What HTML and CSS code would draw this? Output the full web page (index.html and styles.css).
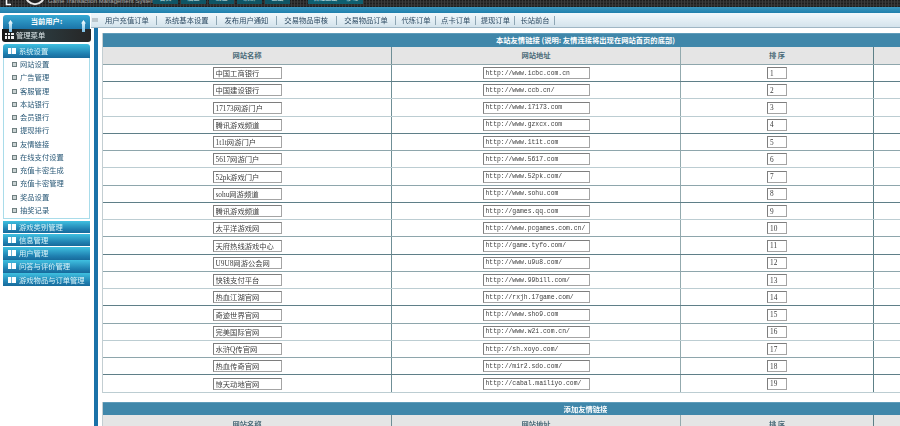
FILE: index.html
```html
<!DOCTYPE html>
<html lang="zh">
<head>
<meta charset="utf-8">
<title>友情链接管理</title>
<link rel="stylesheet" href="styles.css">
</head>
<body>
<div class="page">
  <header class="topbar">
    <svg class="logo" width="46" height="7" viewBox="0 0 46 7"><path d="M6.5 0v4.5H11" fill="none" stroke="#fff" stroke-width="1.6"/><circle cx="35" cy="-5" r="9.2" fill="#222" stroke="#e8e8e8" stroke-width="2"/></svg>
    <span class="system-name">Game Transaction Management System</span>
    <div class="tools">
      <span class="tool">首页</span><span class="tool">后退</span><span class="tool">前进</span><span class="tool">刷新</span><span class="tool">退出</span>
    </div>
    <span class="status">管理退出 · 移域</span>
  </header>
  <div class="strip"></div>
  <div class="body">
    <aside class="sidebar">
      <div class="user-tab">当前用户:<i class="pillar pillar-left"></i><i class="pillar pillar-right"></i></div>
      <div class="menu-title">
        <svg width="9" height="7" viewBox="0 0 9 7"><path d="M0 1h2v2H0zM3 1h2v2H3zM6 1h3v2H6zM0 4h2v3H0zM3 4h2v3H3zM6 4h3v3H6z" fill="#eee"/></svg>
        管理菜单
      </div>
      <div class="group-head group-open"><i class="book"></i>系统设置</div>
      <ul class="items">
        <li><i class="bullet"></i>网站设置</li>
        <li><i class="bullet"></i>广告管理</li>
        <li><i class="bullet"></i>客服管理</li>
        <li><i class="bullet"></i>本站银行</li>
        <li><i class="bullet"></i>会员银行</li>
        <li><i class="bullet"></i>提现排行</li>
        <li><i class="bullet"></i>友情链接</li>
        <li><i class="bullet"></i>在线支付设置</li>
        <li><i class="bullet"></i>充值卡密生成</li>
        <li><i class="bullet"></i>充值卡密管理</li>
        <li><i class="bullet"></i>奖品设置</li>
        <li><i class="bullet"></i>抽奖记录</li>
      </ul>
      <div class="group-head"><i class="book"></i>游戏类别管理</div>
      <div class="group-head"><i class="book"></i>信息管理</div>
      <div class="group-head"><i class="book"></i>用户管理</div>
      <div class="group-head"><i class="book"></i>问答与评价管理</div>
      <div class="group-head"><i class="book"></i>游戏物品与订单管理</div>
    </aside>
    <main class="main">
      <nav class="nav">
        <i class="grip"></i>
        <a class="nav-item">用户充值订单</a>
        <a class="nav-item">系统基本设置</a>
        <a class="nav-item">发布用户通知</a>
        <a class="nav-item">交易物品审核</a>
        <a class="nav-item">交易物品订单</a>
        <a class="nav-item nav-short">代练订单</a>
        <a class="nav-item nav-short">点卡订单</a>
        <a class="nav-item nav-short">提现订单</a>
        <a class="nav-item nav-short">长站前台</a>
      </nav>
      <div class="content">
        <i class="handle"></i>
        <section class="panel">
          <h2 class="panel-title">本站友情链接 (说明: 友情连接将出现在网站首页的底部)</h2>
          <div class="row head line-m"><div>网站名称</div><div>网站地址</div><div>排 序</div><div></div></div>
          <div class="row line-d"><div><input class="f-name" value="中国工商银行"></div><div><input class="f-url" value="http://www.icbc.com.cn"></div><div><input class="f-sort" value="1"></div><div></div></div>
          <div class="row line-l"><div><input class="f-name" value="中国建设银行"></div><div><input class="f-url" value="http://www.ccb.cn/"></div><div><input class="f-sort" value="2"></div><div></div></div>
          <div class="row line-l"><div><input class="f-name" value="17173网游门户"></div><div><input class="f-url" value="http://www.17173.com"></div><div><input class="f-sort" value="3"></div><div></div></div>
          <div class="row line-d"><div><input class="f-name" value="腾讯游戏频道"></div><div><input class="f-url" value="http://www.gzxcx.com"></div><div><input class="f-sort" value="4"></div><div></div></div>
          <div class="row line-m"><div><input class="f-name" value="1t1t网游门户"></div><div><input class="f-url" value="http://www.1t1t.com"></div><div><input class="f-sort" value="5"></div><div></div></div>
          <div class="row line-l"><div><input class="f-name" value="5617网游门户"></div><div><input class="f-url" value="http://www.5617.com"></div><div><input class="f-sort" value="6"></div><div></div></div>
          <div class="row line-m"><div><input class="f-name" value="52pk游戏门户"></div><div><input class="f-url" value="http://www.52pk.com/"></div><div><input class="f-sort" value="7"></div><div></div></div>
          <div class="row line-d"><div><input class="f-name" value="sohu网游频道"></div><div><input class="f-url" value="http://www.sohu.com"></div><div><input class="f-sort" value="8"></div><div></div></div>
          <div class="row line-l"><div><input class="f-name" value="腾讯游戏频道"></div><div><input class="f-url" value="http://games.qq.com"></div><div><input class="f-sort" value="9"></div><div></div></div>
          <div class="row line-m"><div><input class="f-name" value="太平洋游戏网"></div><div><input class="f-url" value="http://www.pcgames.com.cn/"></div><div><input class="f-sort" value="10"></div><div></div></div>
          <div class="row line-d"><div><input class="f-name" value="天府热线游戏中心"></div><div><input class="f-url" value="http://game.tyfo.com/"></div><div><input class="f-sort" value="11"></div><div></div></div>
          <div class="row line-m"><div><input class="f-name" value="U9U8网游公会网"></div><div><input class="f-url" value="http://www.u9u8.com/"></div><div><input class="f-sort" value="12"></div><div></div></div>
          <div class="row line-l"><div><input class="f-name" value="快钱支付平台"></div><div><input class="f-url" value="http://www.99bill.com/"></div><div><input class="f-sort" value="13"></div><div></div></div>
          <div class="row line-d"><div><input class="f-name" value="热血江湖官网"></div><div><input class="f-url" value="http://rxjh.17game.com/"></div><div><input class="f-sort" value="14"></div><div></div></div>
          <div class="row line-m"><div><input class="f-name" value="奇迹世界官网"></div><div><input class="f-url" value="http://www.sho9.com"></div><div><input class="f-sort" value="15"></div><div></div></div>
          <div class="row line-l"><div><input class="f-name" value="完美国际官网"></div><div><input class="f-url" value="http://www.w2i.com.cn/"></div><div><input class="f-sort" value="16"></div><div></div></div>
          <div class="row line-m"><div><input class="f-name" value="水浒Q传官网"></div><div><input class="f-url" value="http://sh.xoyo.com/"></div><div><input class="f-sort" value="17"></div><div></div></div>
          <div class="row line-d"><div><input class="f-name" value="热血传奇官网"></div><div><input class="f-url" value="http://mir2.sdo.com/"></div><div><input class="f-sort" value="18"></div><div></div></div>
          <div class="row line-l"><div><input class="f-name" value="惊天动地官网"></div><div><input class="f-url" value="http://cabal.mailiyo.com/"></div><div><input class="f-sort" value="19"></div><div></div></div>
        </section>
        <section class="panel panel-add">
          <h2 class="panel-title">添加友情链接</h2>
          <div class="row head line-m"><div>网站名称</div><div>网站地址</div><div>排 序</div><div></div></div>
        </section>
      </div>
    </main>
  </div>
</div>
</body>
</html>
```
FILE: styles.css
```css
* { box-sizing: border-box; }
html, body { margin: 0; padding: 0; background: #fff; }
body { font-family: "Noto Sans CJK SC", "Liberation Sans", sans-serif; font-size: 7.3px; color: #34505f; }
/* the reference is a downscaled capture, so everything is slightly soft */
.page { width: 900px; height: 426px; display: flex; flex-direction: column; overflow: hidden; filter: blur(0.3px); }

/* top bar: only its lower edge is in view */
.topbar {
  height: 7px; flex: none; display: flex; align-items: flex-end; overflow: hidden;
  background-color: #2c2c2c;
  background-image: repeating-linear-gradient(90deg, #3b3b3b 0 1px, transparent 1px 3px), repeating-linear-gradient(0deg, #1e1e1e 0 1px, transparent 1px 3px);
}
.logo { flex: none; width: 46px; height: 7px; margin-right: 2px; }
.system-name { width: 105px; flex: none; color: #a8a8a8; font-family: "Liberation Sans", sans-serif; font-size: 6px; line-height: 7px; padding-bottom: 2px; white-space: nowrap; overflow: hidden; }
.tools { display: flex; gap: 3px; padding-bottom: 3px; }
.tool { width: 25px; height: 8px; line-height: 4px; background: #0f5565; color: #cfe6ea; text-align: center; font-size: 6px; }
.status { margin: 0 0 3px 18px; width: 55px; height: 8px; line-height: 4px; background: #0f5f70; color: #cfe6ea; text-align: center; font-size: 6px; white-space: nowrap; }
.strip { height: 6px; flex: none; background: linear-gradient(#3b97bf, #1f80ad); }

.body { flex: 1; display: flex; min-height: 0; }

/* sidebar */
.sidebar { width: 91px; flex: none; padding: 2px 0 0 3px; line-height: 13px; }
.user-tab { position: relative; width: 87px; height: 14px; border-radius: 3px 3px 0 0; background: linear-gradient(#36a9d3, #1b74a8); color: #fff; text-align: center; font-weight: 700; }
.pillar { position: absolute; top: 5px; width: 5px; height: 12px; background: linear-gradient(#fff, #a9d8f0 60%, #7cbfe6); clip-path: polygon(50% 0, 100% 30%, 80% 30%, 80% 100%, 20% 100%, 20% 30%, 0 30%); z-index: 2; }
.pillar-left { left: 5px; }
.pillar-right { left: 78px; }
.menu-title { width: 89px; height: 13px; margin-left: -1px; padding-left: 3px; display: flex; align-items: center; gap: 2px; border-radius: 0 0 3px 3px; background: linear-gradient(90deg, #161616, #2c3d42 35%, #262626); color: #dfe8ea; }
.group-head { width: 87px; height: 12.4px; margin-bottom: 0.7px; display: flex; align-items: center; gap: 3px; padding-left: 5px; line-height: 12px; background: linear-gradient(#3fc0e0, #1f7fb0 70%, #176a9b); color: #d9f2f8; white-space: nowrap; }
.group-open { height: 14px; margin: 2px 0 0; border-radius: 3px 3px 0 0; }
.book { width: 8px; height: 6px; flex: none; background: linear-gradient(90deg, #fff 0 3px, #6fb4d4 3px 4px, #fff 4px 8px); }
.items { list-style: none; margin: 0 0 2px; padding: 0 0 1.4px; width: 87px; height: 161px; border: 1px solid #a9dcea; border-top: 0; }
.items li { height: 13.25px; display: flex; align-items: center; gap: 3px; padding-left: 8px; color: #2b5a78; line-height: 13px; }
.bullet { width: 5px; height: 5px; flex: none; border: 1px solid #6f7f80; background: #c9d2d2; }

/* main */
.main { flex: 1; min-width: 0; display: flex; flex-direction: column; }
.nav { height: 15px; flex: none; display: flex; align-items: center; background: linear-gradient(#f1f8fc, #d4e3ec); border-bottom: 1px solid #9fb6c4; color: #2d4a62; white-space: nowrap; }
.grip { width: 6px; height: 4px; margin: 0 0 0 1px; flex: none; background: #bcc7cd; }
.nav-item { padding: 0 7.5px; height: 9px; line-height: 9px; border-right: 1px solid #8ea6b4; }
.nav-item:first-of-type { padding-left: 7px; }
.nav-short { padding: 0 4.5px 0 5px; }
.content { position: relative; flex: 1; min-height: 0; margin-left: 3px; border-left: 4px solid #1a72a8; padding: 5px 0 0 4px; overflow: hidden; }
.handle { position: absolute; left: -3px; top: 221px; width: 3px; height: 23px; background: linear-gradient(90deg, #2a2a2a, #444); }
.handle::after { content: ""; position: absolute; left: 0; top: 10px; border: 2px solid transparent; border-left: 0; border-right: 2px solid #eee; }

/* panels */
.panel { width: 966px; border-left: 1px solid #c3ced2; }
.panel-add { margin-top: 9px; }
.panel-title { margin: 0; height: 13.7px; line-height: 13.7px; background: #4087aa; border-top: 1px solid #5f9cba; color: #fff; font-size: 7.3px; font-weight: 700; text-align: center; }
.row { height: 17.263px; display: grid; grid-template-columns: 289px 289px 193px 1fr; align-items: stretch; border-bottom: 1px solid #8aa5ab; }
.row > div { display: flex; align-items: center; justify-content: center; border-right: 1px solid #6f8f96; }
.row > div:nth-child(3) { border-right-color: #5d8087; }
.row > div:nth-child(2) { border-right-color: #93aaae; }
.row > div:last-child { border-right: 0; }
.head { height: 18.3px; background: #e5e5e5; color: #4a6a78; font-weight: 700; }
.line-d { border-bottom-color: #5f7f88; }
.line-m { border-bottom-color: #8ea6ac; }
.line-l { border-bottom-color: #bccdd2; }

input { height: 12px; margin: 0; padding: 0 2px; background: #fff; border: 1px solid #7e7e7e; border-right-color: #a4a4a4; border-bottom-color: #a4a4a4; border-radius: 0; outline: 0; color: #3c3c3c; }
.f-name { width: 69px; font: 7.3px "Liberation Serif", "Noto Sans CJK SC", serif; }
.f-url { width: 107px; font: 6.4px "Liberation Mono", monospace; }
.f-sort { width: 20px; font: 7.3px "Liberation Serif", serif; }
```
